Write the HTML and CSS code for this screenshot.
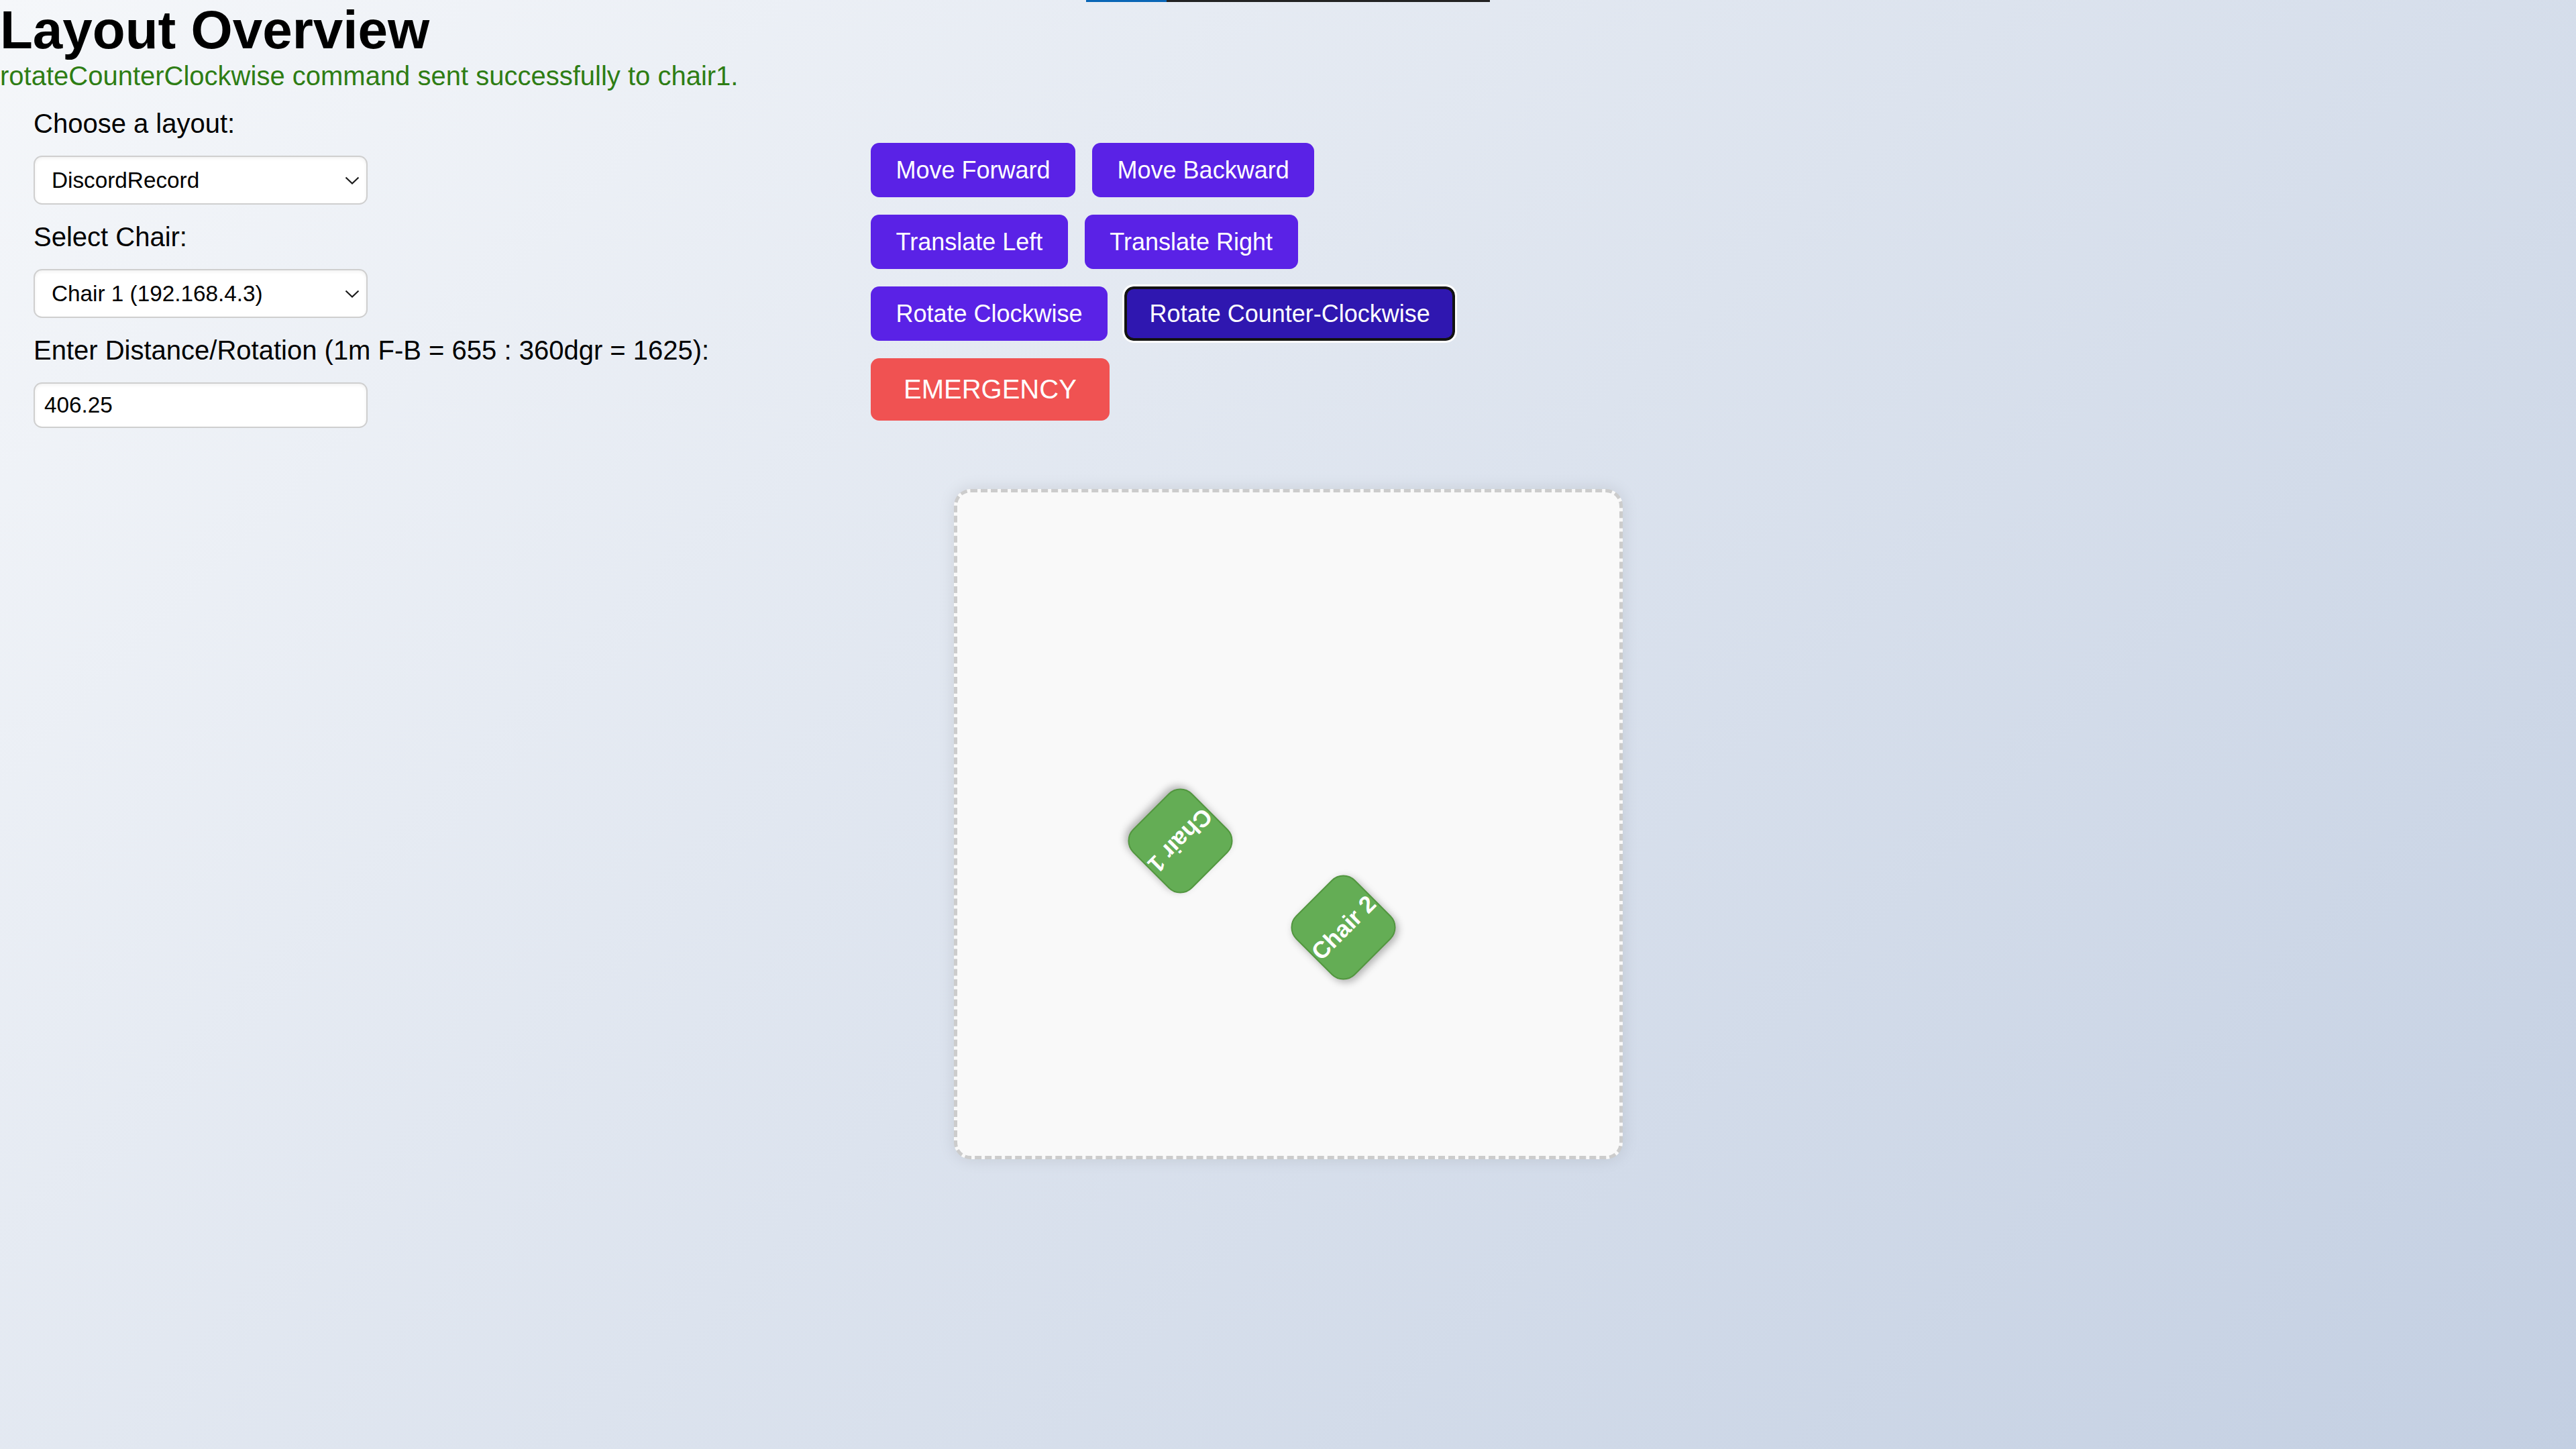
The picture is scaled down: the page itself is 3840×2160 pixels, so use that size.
FILE: index.html
```html
<!DOCTYPE html>
<html lang="en">
<head>
<meta charset="utf-8">
<title>Layout Overview</title>
<link rel="stylesheet" href="styles.css">
</head>
<body>
<div class="scroll-edge"><span class="scroll-edge-fill"></span></div>
<h1 class="page-title">Layout Overview</h1>
<p class="status">rotateCounterClockwise command sent successfully to chair1.</p>
<div class="controls">
  <div class="form-panel">
    <label class="field-label" for="layout">Choose a layout:</label>
    <div class="select-wrap">
      <select id="layout" class="field-select"><option>DiscordRecord</option></select>
      <svg class="chevron" viewBox="0 0 22 12" aria-hidden="true"><path d="M1.5 1.5 L11 10.5 L20.5 1.5"/></svg>
    </div>
    <label class="field-label" for="chair">Select Chair:</label>
    <div class="select-wrap">
      <select id="chair" class="field-select"><option>Chair 1 (192.168.4.3)</option></select>
      <svg class="chevron" viewBox="0 0 22 12" aria-hidden="true"><path d="M1.5 1.5 L11 10.5 L20.5 1.5"/></svg>
    </div>
    <label class="field-label" for="amount">Enter Distance/Rotation (1m F-B = 655 : 360dgr = 1625):</label>
    <input id="amount" class="field-input" type="text" value="406.25">
  </div>
  <div class="button-panel">
    <div class="button-row">
      <button class="cmd">Move Forward</button>
      <button class="cmd">Move Backward</button>
    </div>
    <div class="button-row">
      <button class="cmd">Translate Left</button>
      <button class="cmd">Translate Right</button>
    </div>
    <div class="button-row">
      <button class="cmd">Rotate Clockwise</button>
      <button class="cmd cmd-active">Rotate Counter-Clockwise</button>
    </div>
    <div class="button-row">
      <button class="cmd emergency">EMERGENCY</button>
    </div>
  </div>
</div>
<div class="canvas">
  <div class="chair" style="left:270px;top:457px;transform:rotate(135deg)">Chair 1</div>
  <div class="chair" style="left:513px;top:586px;transform:rotate(-45deg)">Chair 2</div>
</div>
</body>
</html>
```
FILE: styles.css
```css
html, body {
  margin: 0;
  padding: 0;
}

body {
  position: relative;
  min-height: 2160px;
  font-family: "Liberation Sans", Arial, sans-serif;
  color: #000;
  background: linear-gradient(135deg, #f5f7fa 0%, #c3cfe2 100%);
  overflow: hidden;
}

.scroll-edge {
  position: absolute;
  top: 0;
  left: 1619px;
  width: 602px;
  height: 3px;
  background: #222;
}

.scroll-edge-fill {
  display: block;
  width: 120px;
  height: 100%;
  background: #0a66b6;
}

.page-title {
  margin: 0;
  font-size: 80px;
  line-height: 90px;
  font-weight: bold;
}

.status {
  margin: 0;
  font-size: 40px;
  line-height: 46px;
  color: #2e7d14;
}

.controls {
  display: flex;
  margin-top: 25px;
}

.form-panel {
  width: 1298px;
  box-sizing: border-box;
  padding: 0 50px;
  display: flex;
  flex-direction: column;
  align-items: flex-start;
  gap: 25px;
}

.field-label {
  display: block;
  font-size: 40px;
  line-height: 46px;
}

.select-wrap {
  position: relative;
  width: 498px;
}

.field-select,
.field-input {
  display: block;
  width: 498px;
  box-sizing: border-box;
  border: 2.5px solid #cfcfcf;
  border-radius: 12.5px;
  background: #fff;
  color: #000;
  font-family: "Liberation Sans", Arial, sans-serif;
  font-size: 33.3px;
  box-shadow: inset 0 2px 5px rgba(0, 0, 0, 0.06);
  outline: none;
  margin: 0;
}

.field-select {
  -webkit-appearance: none;
  appearance: none;
  height: 73px;
  padding: 0 60px 0 25px;
}

.field-input {
  height: 68px;
  padding: 0 14px;
}

.chevron {
  position: absolute;
  right: 12px;
  top: 50%;
  width: 22px;
  height: 12px;
  margin-top: -6px;
  pointer-events: none;
  fill: none;
  stroke: #1a1a1a;
  stroke-width: 2.2;
}

.button-panel {
  padding-top: 52px;
  display: flex;
  flex-direction: column;
  gap: 26px;
}

.button-row {
  display: flex;
  gap: 25px;
}

.cmd {
  height: 81px;
  box-sizing: border-box;
  padding: 0 37.5px;
  border: none;
  border-radius: 12.5px;
  background: #5a22e6;
  color: #fff;
  font-family: "Liberation Sans", Arial, sans-serif;
  font-size: 36px;
  cursor: pointer;
}

.cmd-active {
  background: #2f17b0;
  border: 4px solid #131313;
  padding: 0 33.5px;
  outline: 3px solid #fff;
  border-radius: 14px;
}

.emergency {
  height: 93px;
  padding: 0 49px;
  background: #f05252;
  font-size: 40px;
}

.canvas {
  position: relative;
  width: 997px;
  height: 999px;
  box-sizing: border-box;
  margin: 91px auto 0;
  border: 5px dashed #cccccc;
  border-radius: 25px;
  background: #f9f9f9;
  box-shadow: 0 0 25px rgba(0, 0, 0, 0.1);
}

.chair {
  position: absolute;
  width: 125px;
  height: 125px;
  box-sizing: border-box;
  display: flex;
  align-items: center;
  justify-content: center;
  border: 2.5px solid #52963f;
  border-radius: 25px;
  background: #64ad55;
  color: #fff;
  font-weight: bold;
  font-size: 35px;
  white-space: nowrap;
  box-shadow: 0 5px 12px rgba(0, 0, 0, 0.3);
}
```
